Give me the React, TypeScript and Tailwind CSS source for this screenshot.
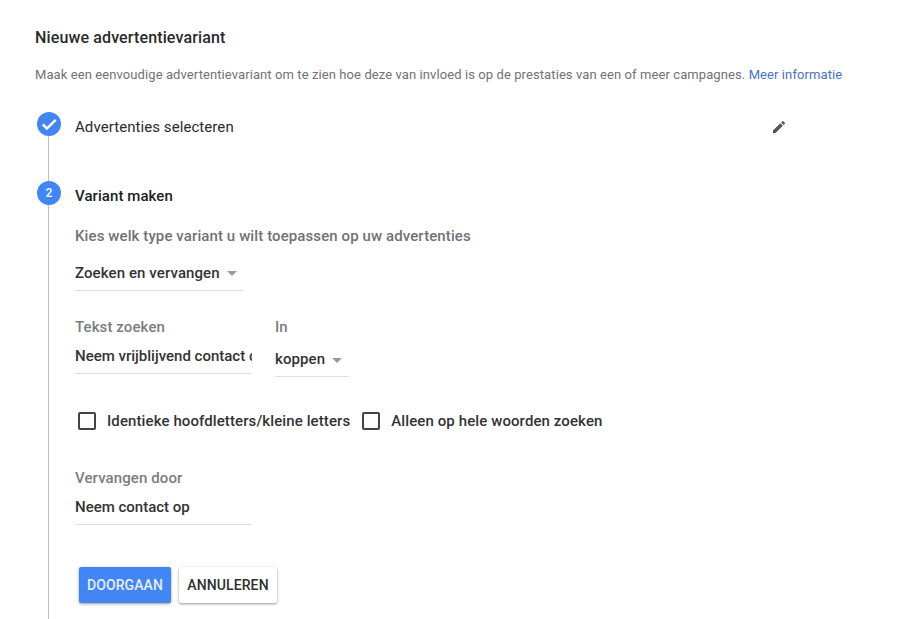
import React from "react";

const Caret = () => (
  <span className="ml-[7px] mt-[1px] h-0 w-0 border-x-[5px] border-t-[5px] border-x-transparent border-t-[#9a9a9a]" />
);

const Box = ({ label }: { label: string }) => (
  <div className="flex items-center">
    <span className="h-[18px] w-[18px] rounded-[2px] border-2 border-[#444]" />
    <span className="ml-[11px] text-[15px] font-medium tracking-[0.1px] text-[#333]">{label}</span>
  </div>
);

export default function App() {
  return (
    <div className="h-[619px] w-[913px] overflow-hidden bg-white pl-[35px] font-['Roboto',sans-serif]">
      <h1 className="pt-[28px] text-[16px] leading-[20px] font-medium tracking-[0.13px] text-[#2a2a2a]">
        Nieuwe advertentievariant
      </h1>
      <p className="mt-[17px] text-[13px] leading-[20px] tracking-[0.09px] whitespace-nowrap text-[#6f7276]">
        Maak een eenvoudige advertentievariant om te zien hoe deze van invloed is op de prestaties van een of meer campagnes.{" "}
        <span className="text-[#4a72c4]">Meer informatie</span>
      </p>

      <div className="mt-[27px] flex">
        <div className="flex w-[40px] shrink-0 flex-col items-start pl-[2px]">
          <div className="flex h-[24px] w-[24px] items-center justify-center rounded-full bg-[#4285f4]">
            <svg viewBox="0 0 24 24" className="h-[20px] w-[20px]" fill="none" stroke="#fff" strokeWidth="3">
              <path d="M4.5 12.5l5 5L20 7" />
            </svg>
          </div>
          <div className="ml-[11px] h-[45px] w-[1px] bg-[#bdbdbd]" />
          <div className="flex h-[24px] w-[24px] items-center justify-center rounded-full bg-[#4285f4] text-[12px] font-medium text-white">
            2
          </div>
          <div className="ml-[11px] h-[420px] w-[1px] bg-[#bdbdbd]" />
        </div>

        <div className="w-[780px]">
          <div className="flex h-[30px] w-[712px] items-center justify-between">
            <span className="text-[15px] tracking-[0.07px] text-[#2a2a2a]">Advertenties selecteren</span>
            <svg viewBox="0 0 24 24" className="h-[16px] w-[16px]" fill="#555">
              <path d="M3 17.25V21h3.75L17.81 9.94l-3.75-3.75L3 17.25zM20.71 7.04a1 1 0 0 0 0-1.41l-2.34-2.34a1 1 0 0 0-1.41 0l-1.83 1.83 3.75 3.75 1.83-1.83z" />
            </svg>
          </div>

          <div className="mt-[42px] flex h-[24px] items-center text-[15px] font-medium tracking-[0.07px] text-[#202124]">
            Variant maken
          </div>

          <p className="mt-[18px] text-[15px] leading-[20px] font-medium tracking-[0.1px] text-[#6f7276]">
            Kies welk type variant u wilt toepassen op uw advertenties
          </p>

          <div className="mt-[10px] flex h-[35px] w-[169px] items-center border-b border-[#e0e0e0] text-[15px] font-medium tracking-[0.1px] text-[#333]">
            Zoeken en vervangen
            <Caret />
          </div>

          <div className="mt-[26px] flex">
            <div className="w-[177px]">
              <div className="text-[15px] leading-[20px] font-medium tracking-[0.1px] text-[#7a7d80]">Tekst zoeken</div>
              <input
                readOnly
                value="Neem vrijblijvend contact op"
                className="mt-[9px] block h-[28px] w-full border-b border-[#e0e0e0] bg-transparent pb-[8px] text-[15px] leading-[20px] font-medium text-[#333] outline-none"
              />
            </div>
            <div className="ml-[23px] w-[74px]">
              <div className="text-[15px] leading-[20px] font-medium tracking-[0.1px] text-[#7a7d80]">In</div>
              <div className="mt-[8px] flex h-[32px] items-center border-b border-[#e0e0e0] pb-[2px] text-[15px] font-medium tracking-[0.1px] text-[#333]">
                koppen
                <Caret />
              </div>
            </div>
          </div>

          <div className="mt-[34px] ml-[3px] flex h-[20px] gap-[12px]">
            <Box label="Identieke hoofdletters/kleine letters" />
            <Box label="Alleen op hele woorden zoeken" />
          </div>

          <div className="mt-[37px] text-[15px] leading-[20px] font-medium tracking-[0.1px] text-[#7a7d80]">Vervangen door</div>
          <div className="mt-[9px] h-[28px] w-[177px] border-b border-[#e0e0e0] text-[15px] leading-[20px] font-medium text-[#333]">
            Neem contact op
          </div>

          <div className="mt-[42px] ml-[4px] flex gap-[8px]">
            <button className="h-[36px] w-[92px] rounded-[2px] bg-[#4285f4] text-[14px] font-medium tracking-[0.1px] text-[#e8f0fe] shadow-[0_1px_3px_rgba(0,0,0,0.4)]">
              DOORGAAN
            </button>
            <button className="h-[36px] w-[98px] rounded-[2px] bg-white text-[14px] font-medium tracking-[0.1px] text-[#2f2f2f] shadow-[0_1px_3px_rgba(0,0,0,0.4)]">
              ANNULEREN
            </button>
          </div>
        </div>
      </div>
    </div>
  );
}
